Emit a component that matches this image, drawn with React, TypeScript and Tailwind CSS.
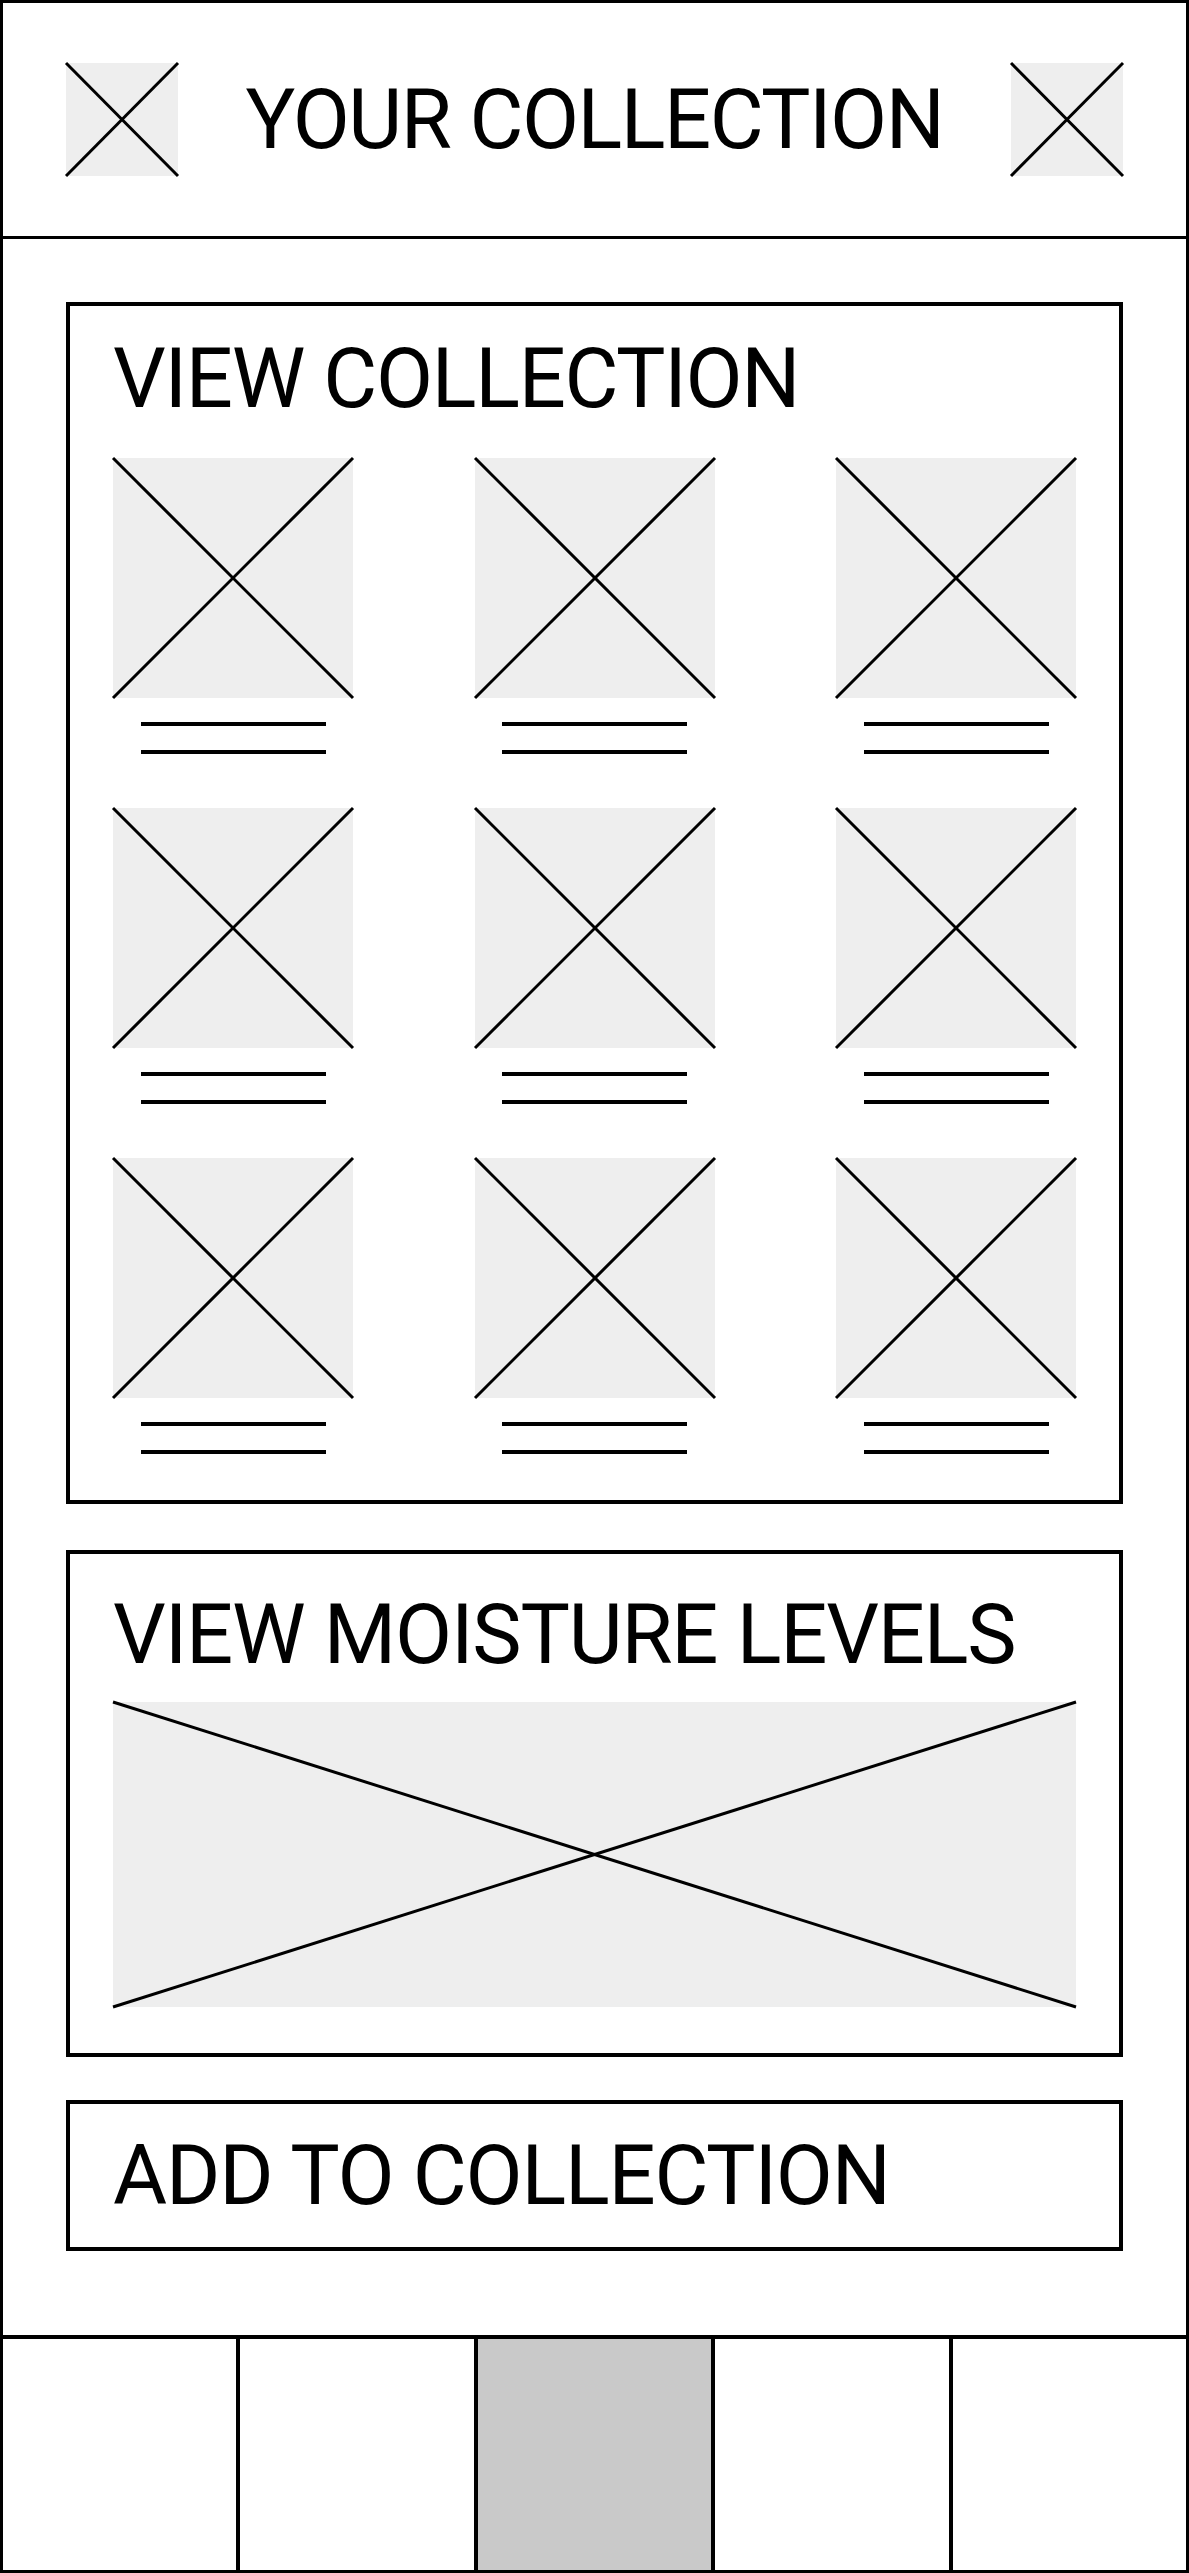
import React from "react";

function Placeholder({ className }: { className: string }) {
  return (
    <div className={`relative bg-[#eeeeee] shrink-0 ${className}`}>
      <svg
        className="absolute inset-0 w-full h-full overflow-visible"
        viewBox="0 0 100 100"
        preserveAspectRatio="none"
      >
        <line x1="0" y1="0" x2="100" y2="100" stroke="#000" strokeWidth="3" vectorEffect="non-scaling-stroke" />
        <line x1="100" y1="0" x2="0" y2="100" stroke="#000" strokeWidth="3" vectorEffect="non-scaling-stroke" />
      </svg>
    </div>
  );
}

function Item() {
  return (
    <div className="flex flex-col items-center w-[240px]">
      <Placeholder className="w-[240px] h-[240px]" />
      <div className="mt-[24px] w-[185px] h-[4px] bg-black" />
      <div className="mt-[24px] w-[185px] h-[4px] bg-black" />
    </div>
  );
}

function Row() {
  return (
    <div className="flex justify-between">
      <Item />
      <Item />
      <Item />
    </div>
  );
}

export default function App() {
  return (
    <div
      className="w-[1189px] h-[2573px] border-[3px] border-black bg-white flex flex-col text-black"
      style={{ fontFamily: "Roboto, 'Liberation Sans', sans-serif" }}
    >
      <header className="h-[236px] shrink-0 border-b-[3px] border-black flex items-center justify-between px-[63px]">
        <Placeholder className="w-[112px] h-[113px]" />
        <h1 className="text-[83px] leading-none font-normal whitespace-nowrap tracking-[-1.5px]">YOUR COLLECTION</h1>
        <Placeholder className="w-[112px] h-[113px]" />
      </header>

      <main className="flex-1 flex flex-col px-[63px] pt-[63px]">
        <section className="border-4 border-black px-[43px] pt-[31px] pb-[46px]">
          <h2 className="text-[83px] leading-none font-normal whitespace-nowrap tracking-[-1.3px]">VIEW COLLECTION</h2>
          <div className="mt-[38px] flex flex-col gap-[54px]">
            <Row />
            <Row />
            <Row />
          </div>
        </section>

        <section className="mt-[46px] border-4 border-black px-[43px] pt-[39px] pb-[46px]">
          <h2 className="text-[83px] leading-none font-normal whitespace-nowrap tracking-[-1.2px]">VIEW MOISTURE LEVELS</h2>
          <Placeholder className="mt-[26px] w-full h-[305px]" />
        </section>

        <section className="mt-[43px] h-[151px] border-4 border-black px-[43px] flex items-center">
          <h2 className="text-[83px] leading-none font-normal whitespace-nowrap tracking-[-1.2px]">ADD TO COLLECTION</h2>
        </section>
      </main>

      <nav className="h-[235px] shrink-0 border-t-4 border-black grid grid-cols-5 gap-[4px] bg-black">
        <div className="bg-white" />
        <div className="bg-white" />
        <div className="bg-[#c9c9c9]" />
        <div className="bg-white" />
        <div className="bg-white" />
      </nav>
    </div>
  );
}
